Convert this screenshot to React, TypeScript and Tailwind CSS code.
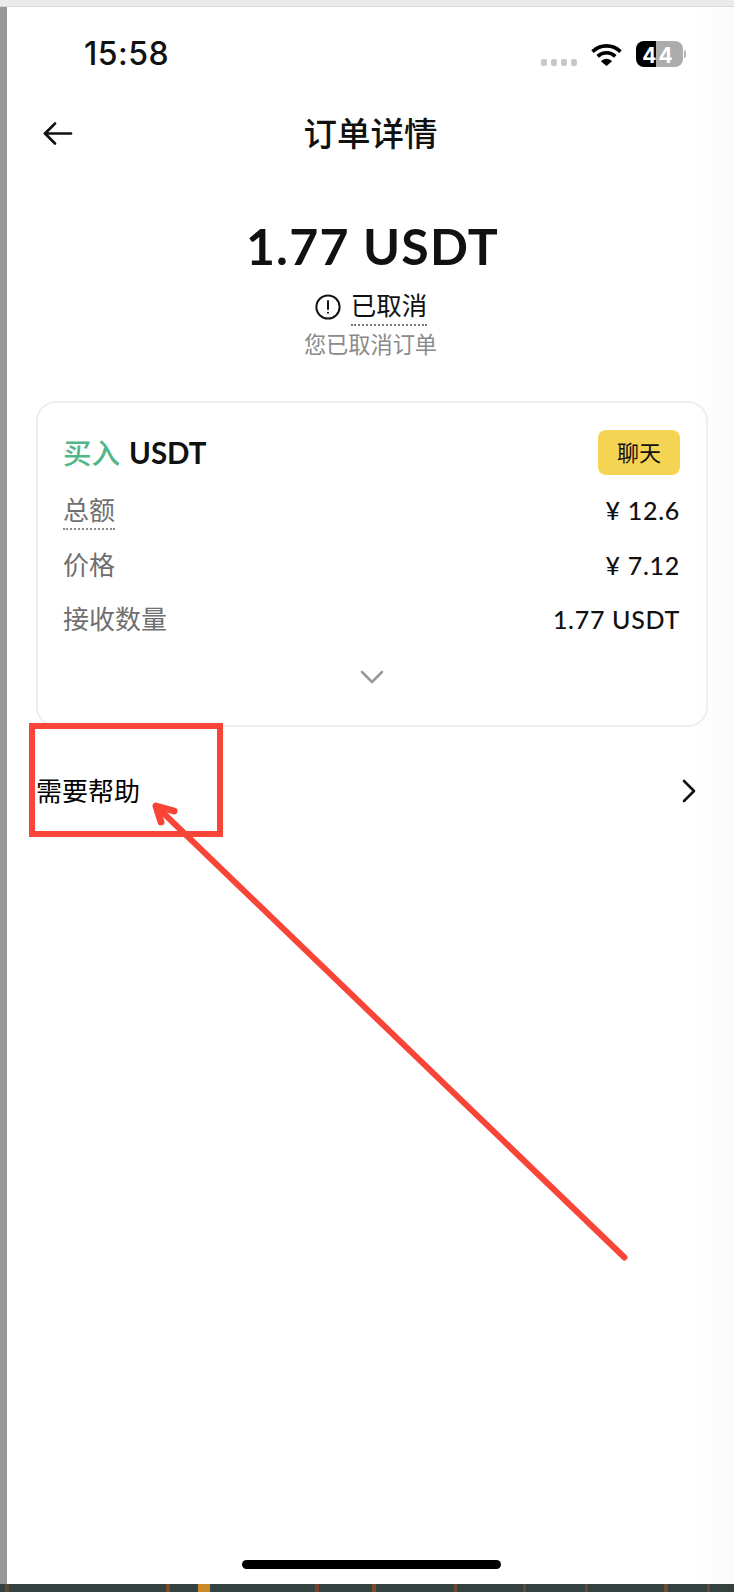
import React from "react";

function Row({ label, value, dotted }: { label: string; value: string; dotted?: boolean }) {
  return (
    <div className="flex h-[54.5px] items-start justify-between">
      <span className={`text-[26px] leading-[36px] text-[#6f6f6f] ${dotted ? "border-b-2 border-dotted border-[#8a8a8a]" : ""}`}>{label}</span>
      <span className="text-[25px] leading-[36px] font-medium tracking-[0.7px] text-[#111111]">{value}</span>
    </div>
  );
}

function Strip() {
  const spots = [[5, "#5b4a38", 4], [166, "#7a4a2c", 4], [198, "#c98a2a", 12], [315, "#7a3f2a", 4], [372, "#7a4a2c", 4], [454, "#6f4a30", 3], [523, "#5f4a36", 3], [585, "#5f4a36", 3], [664, "#6f4a30", 4], [707, "#5f4a36", 3]] as const;
  return (
    <svg width="734" height="8" className="block">
      <rect width="734" height="8" fill="#33423f" />
      {spots.map(([x, c, w]) => <rect key={x} x={x} y="0" width={w} height="8" fill={c} />)}
    </svg>
  );
}

export default function App() {
  return (
    <div className="relative flex h-[1592px] w-[734px] flex-col overflow-hidden bg-white font-['Lato','Noto_Sans_CJK_SC',sans-serif] text-[#111111]">
      <div className="h-[7px] shrink-0 border-b border-[#d9dbda] bg-[#e9ebea]" />
      <div className="flex min-h-0 flex-1">
        <div className="w-[7px] shrink-0 bg-[#979797]" />
        <main className="flex min-w-0 flex-1 flex-col bg-gradient-to-r from-white from-[94%] to-[#fbfbfb]">
          {/* status bar */}
          <div className="flex h-[58px] items-start pt-[27px] pr-[48px] pl-[77px]">
            <span className="font-['Inter',sans-serif] text-[32px] leading-[40px] font-medium tracking-[0.5px] text-[#111]">15:58</span>
            <div className="ml-auto flex items-start">
              <div className="mt-[25px] flex gap-[4px]">
                {[0, 1, 2, 3].map((i) => <span key={i} className="h-[7px] w-[6px] rounded-[2px] bg-[#c8c8c8]" />)}
              </div>
              <svg className="mt-[9px] ml-[14px]" width="31" height="23" viewBox="0 0 31 23" fill="none">
                <path d="M1.5 8.6C9.5 1 21.5 1 29.5 8.6" stroke="#000" strokeWidth="3.6" />
                <path d="M6.7 13.4C11.8 8.6 19.2 8.6 24.3 13.4" stroke="#000" strokeWidth="3.6" />
                <path d="M9.9 18.2 15.5 23 21.1 18.2C17.8 14.8 13.2 14.8 9.9 18.2Z" fill="#000" />
              </svg>
              <div className="relative mt-[7px] ml-[14px] flex h-[26px] w-[47px] overflow-hidden rounded-[8px]">
                <div className="w-[20px] bg-black" />
                <div className="flex-1 bg-[#acacac]" />
                <span className="absolute inset-0 pt-[2px] pr-[2px] text-center font-['Inter',sans-serif] text-[21px] leading-[26px] font-bold tracking-[2px] text-white">44</span>
              </div>
              <span className="mt-[16px] ml-[1px] h-[8px] w-[2px] rounded-r-sm bg-[#b5b5b5]" />
            </div>
          </div>

          {/* nav */}
          <div className="relative mt-[44px] flex h-[48px] items-center justify-center">
            <svg className="absolute top-[13px] left-[36px]" width="30" height="23" viewBox="0 0 30 23" fill="none" stroke="#111" strokeWidth="2.6" strokeLinecap="round" strokeLinejoin="round">
              <path d="M2 11.5H28" />
              <path d="M12 1.5 2 11.5 12 21.5" />
            </svg>
            <h1 className="text-[33.5px] leading-[48px] font-medium text-[#111]">订单详情</h1>
          </div>

          {/* amount */}
          <div className="mt-[55px] flex flex-col items-center">
            <div className="pl-[4px] text-[50px] leading-[68px] font-bold tracking-[1.2px] text-[#111]">1.77 USDT</div>
            <div className="mt-[7px] flex h-[42px] items-start pl-[1px]">
              <svg className="mt-[7px] mr-[10px]" width="26" height="26" viewBox="0 0 26 26" fill="none" stroke="#111" strokeWidth="2">
                <circle cx="13" cy="13" r="11.6" />
                <path d="M13 7V15" strokeLinecap="round" />
                <circle cx="13" cy="18.8" r="1" fill="#111" stroke="none" />
              </svg>
              <span className="border-b-2 border-dotted border-[#777] text-[25.5px] leading-[37px] text-[#111]">已取消</span>
            </div>
            <div className="text-[22.2px] leading-[32px] text-[#8a8a8a]">您已取消订单</div>
          </div>

          {/* card */}
          <section className="mt-[40px] mr-[26px] ml-[29px] flex h-[326px] flex-col rounded-[20px] border-2 border-[#eeeeee] pt-[27px] pr-[26px] pl-[25px]">
            <div className="flex h-[45px] items-center justify-between">
              <div className="flex items-center gap-[9px] font-bold">
                <span className="text-[28.5px] leading-[40px] font-medium text-[#52b788]">买入</span>
                <span className="text-[29.5px] leading-[40px] text-[#111]">USDT</span>
              </div>
              <button className="h-[45px] w-[82px] rounded-[8px] bg-[#f5d453] text-[22px] font-normal text-[#111]">聊天</button>
            </div>
            <div className="mt-[17px]">
              <Row label="总额" value="¥ 12.6" dotted />
              <Row label="价格" value="¥ 7.12" />
              <Row label="接收数量" value="1.77 USDT" />
            </div>
            <div className="flex justify-center">
              <svg className="mt-[14px]" width="24" height="14" viewBox="0 0 24 14" fill="none" stroke="#999" strokeWidth="2.6" strokeLinecap="round" strokeLinejoin="round">
                <path d="M2 2 12 12 22 2" />
              </svg>
            </div>
          </section>

          {/* help */}
          <div className="mt-[45px] mr-[38px] ml-[29px] flex h-[38px] items-center justify-between">
            <span className="text-[26px] leading-[38px] font-normal text-[#000]">需要帮助</span>
            <svg width="14" height="24" viewBox="0 0 14 24" fill="none" stroke="#111" strokeWidth="2.6" strokeLinecap="round" strokeLinejoin="round">
              <path d="M2 2 12 12 2 22" />
            </svg>
          </div>

          {/* home indicator */}
          <div className="mt-auto mb-[15px] flex justify-center pl-[2px]">
            <span className="h-[9px] w-[259px] rounded-full bg-black" />
          </div>
        </main>
      </div>
      <div className="h-[8px] shrink-0"><Strip /></div>

      {/* annotation overlay */}
      <div className="absolute top-[723px] left-[29px] h-[114px] w-[194px] border-[6px] border-[#f94438]" />
      <svg className="pointer-events-none absolute top-0 left-0" width="734" height="1592" fill="none" stroke="#f94438" strokeLinecap="round" strokeLinejoin="round">
        <path d="M624.5 1257.5 156 806" strokeWidth="6" />
        <path d="M174 811 156 806 161 822" strokeWidth="7" />
      </svg>
    </div>
  );
}
